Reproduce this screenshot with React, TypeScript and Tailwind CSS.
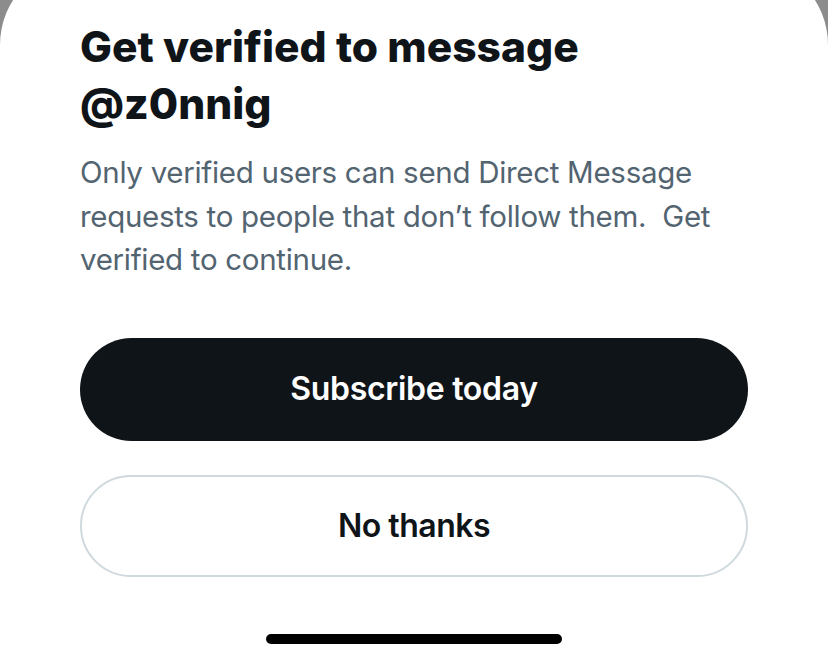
export default function App() {
  return (
    <div className="h-[662px] w-[828px] overflow-hidden bg-[#8c8c8c]">
      <div
        className="-mt-[39px] flex h-[701px] flex-col rounded-t-[84px] bg-white px-[80px] pt-[57px]"
        style={{ fontFamily: "Inter, 'Noto Sans', sans-serif" }}
      >
        <h1 className="text-[42.5px] font-extrabold leading-[57px] tracking-[0px] text-[#0f1419]">
          Get verified to message
          <br />
          @z0nnig
        </h1>
        <p className="mt-[19px] text-[29.5px] leading-[43.5px] tracking-[-0.3px] text-[#536471]">
          Only verified users can send Direct Message requests to people that don’t follow them.&nbsp; Get verified to continue.
        </p>
        <button
          type="button"
          className="mt-[56px] flex h-[103px] w-full items-center justify-center rounded-full bg-[#0f1419] text-[32px] font-semibold tracking-[-0.3px] text-white"
        >
          Subscribe today
        </button>
        <button
          type="button"
          className="mt-[34px] flex h-[102px] w-full items-center justify-center rounded-full border-2 border-[#cfd9de] bg-white text-[32px] font-semibold tracking-[-0.5px] text-[#0f1419]"
        >
          No thanks
        </button>
        <div className="mt-[57px] flex justify-center">
          <div className="h-[10px] w-[296px] rounded-full bg-black" />
        </div>
      </div>
    </div>
  );
}
